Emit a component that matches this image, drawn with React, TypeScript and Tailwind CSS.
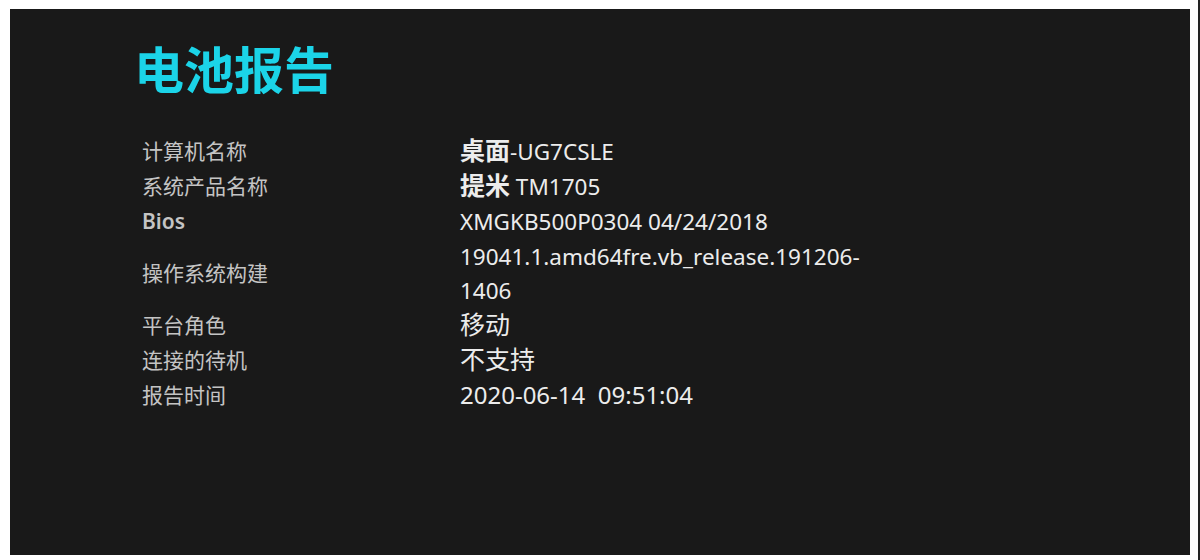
const rows: { label: string; value: React.ReactNode; bold?: boolean }[] = [
  { label: '计算机名称', value: <><span className="text-[25px] leading-[20px] font-semibold">桌面</span>-UG7CSLE</> },
  { label: '系统产品名称', value: <><span className="text-[25px] leading-[20px] font-semibold">提米</span> TM1705</> },
  { label: 'Bios', bold: true, value: 'XMGKB500P0304 04/24/2018' },
  { label: '操作系统构建', value: '19041.1.amd64fre.vb_release.191206-1406' },
  { label: '平台角色', value: <span className="text-[25px] leading-[20px]">移动</span> },
  { label: '连接的待机', value: <span className="text-[25px] leading-[20px]">不支持</span> },
  { label: '报告时间', value: <span className="text-[24px] leading-[20px]">2020-06-14{'\u00a0\u00a0'}09:51:04</span> },
]

export default function App() {
  return (
    <div
      className="w-[1200px] h-[560px] bg-white pt-[9px] pl-[10px] pr-[8px] pb-[5px] border-r-[2px] border-[#222]"
      style={{ fontFamily: '"Noto Sans", "Noto Sans CJK SC", sans-serif' }}
    >
      <div className="h-full bg-[#191919] pt-[31px] pl-[124px]">
        <h1 className="text-[50px] leading-[60px] font-bold text-[#1bd4e8] mb-[34px]">电池报告</h1>

        <div className="grid grid-cols-[318px_420px] pl-[8px] items-center">
          {rows.map((r) => (
            <div key={r.label} className="contents">
              <div className={`text-[21px] text-[#c4c4c4] ${r.bold ? 'font-semibold' : ''}`}>{r.label}</div>
              <div className="text-[22.5px] leading-[34px] py-[0.5px] text-[#ececec]">{r.value}</div>
            </div>
          ))}
        </div>
      </div>
    </div>
  )
}
